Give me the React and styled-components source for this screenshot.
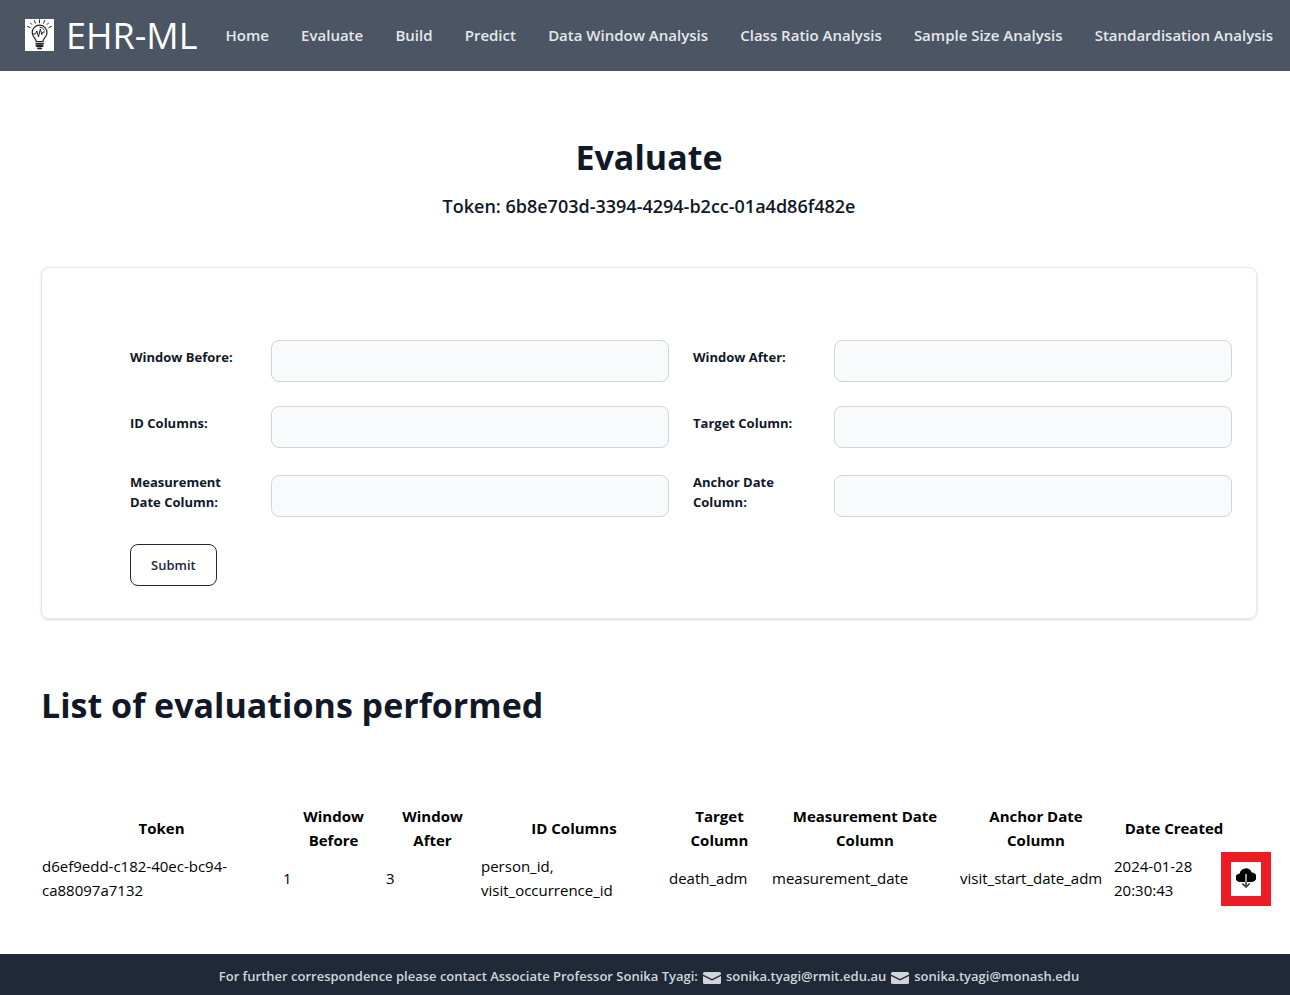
import React from "react";
import styled, { createGlobalStyle } from "styled-components";

const GlobalStyle = createGlobalStyle`
  *, *::before, *::after { box-sizing: border-box; }
  body {
    margin: 0;
    background: #fff;
    color: #000;
    font-family: "Segoe UI", "Open Sans", "Noto Sans", sans-serif;
    font-size: 15px;
    line-height: 24px;
  }
  h1, h2, p { margin: 0; }
  button, input { font: inherit; color: inherit; }
`;

const Page = styled.div`
  display: flex;
  flex-direction: column;
  min-height: 100vh;
`;

const Header = styled.header`
  display: flex;
  align-items: center;
  justify-content: space-between;
  gap: 28px;
  min-height: 71px;
  padding: 0 17px 0 25px;
  background: #4b5563;
`;

const Brand = styled.a`
  display: flex;
  align-items: center;
  gap: 12px;
  color: #fff;
  text-decoration: none;
  font-size: 36px;
  font-weight: 500;
  line-height: 40px;
  white-space: nowrap;

  svg { display: block; margin-bottom: 2px; }
`;

const Nav = styled.nav`
  display: flex;
  flex: 1;
  justify-content: space-between;
  padding-bottom: 2px;
`;

const NavLink = styled.a`
  color: #e5e7eb;
  font-size: 15px;
  font-weight: 600;
  text-decoration: none;
  white-space: nowrap;
`;

const Main = styled.main`
  flex: 1;
  padding: 64px 33px 50px 41px;
`;

const Title = styled.h1`
  color: #111827;
  font-size: 34px;
  font-weight: 700;
  line-height: 45px;
  text-align: ${(p) => (p.$center ? "center" : "left")};
`;

const Token = styled.p`
  margin-top: 12px;
  color: #111827;
  font-size: 18px;
  font-weight: 600;
  line-height: 28px;
  text-align: center;
`;

const Card = styled.section`
  margin: 47px 0 64px;
  padding: 72px 24px 32px 88px;
  border: 1px solid #e5e7eb;
  border-radius: 8px;
  box-shadow: 0 1px 3px rgba(0, 0, 0, 0.1), 0 1px 2px rgba(0, 0, 0, 0.06);
`;

const Form = styled.form`
  display: grid;
  grid-template-columns: 117px 1fr 117px 1fr;
  gap: 24px;
  align-items: center;
`;

const Label = styled.label`
  margin-bottom: 8px;
  color: #111827;
  font-size: 13px;
  font-weight: 700;
  line-height: 20px;
`;

const Input = styled.input`
  width: 100%;
  height: 42px;
  padding: 0 10px;
  border: 1px solid #d1d5db;
  border-radius: 8px;
  background: #f9fafb;
`;

const SubmitButton = styled.button`
  justify-self: start;
  height: 42px;
  padding: 0 20px;
  border: 1px solid #1f2937;
  border-radius: 8px;
  background: #fff;
  color: #1f2937;
  font-size: 13px;
  font-weight: 600;
  line-height: 20px;
`;

const Table = styled.table`
  width: 100%;
  margin-top: 76px;
  table-layout: fixed;
  border-collapse: collapse;

  th, td { padding: 0 1px 2px; }
  th { font-weight: 700; }
  td { text-align: left; white-space: nowrap; }
`;

const DownloadCell = styled.td`
  position: relative;
`;

const DownloadButton = styled.button`
  position: absolute;
  top: 50%;
  left: 50%;
  transform: translate(-50%, -50%);
  display: flex;
  align-items: center;
  justify-content: center;
  width: 50px;
  height: 54px;
  padding: 0 0 2px;
  border: 10px solid #ed1c24;
  background: #fff;
`;

const Footer = styled.footer`
  display: flex;
  align-items: center;
  justify-content: center;
  gap: 5px;
  min-height: 41px;
  padding: 2px 0 0 8px;
  background: #1f2937;
  color: #d1d5db;
  font-size: 13px;
  font-weight: 600;
`;

const MailLink = styled.a`
  display: flex;
  align-items: center;
  gap: 5px;
  color: inherit;
  text-decoration: none;

  svg { margin-top: 4px; }
`;

const links = [
  "Home",
  "Evaluate",
  "Build",
  "Predict",
  "Data Window Analysis",
  "Class Ratio Analysis",
  "Sample Size Analysis",
  "Standardisation Analysis",
];

const fields = [
  ["windowBefore", "Window Before:"],
  ["windowAfter", "Window After:"],
  ["idColumns", "ID Columns:"],
  ["targetColumn", "Target Column:"],
  ["measurementDate", "Measurement Date Column:"],
  ["anchorDate", "Anchor Date Column:"],
];

const columns = [
  [241, "Token"],
  [103, "Window", "Before"],
  [95, "Window", "After"],
  [188, "ID Columns"],
  [103, "Target", "Column"],
  [188, "Measurement Date", "Column"],
  [154, "Anchor Date", "Column"],
  [122, "Date Created"],
  [22, ""],
];

const evaluations = [
  [
    ["d6ef9edd-c182-40ec-bc94-", "ca88097a7132"],
    ["1"],
    ["3"],
    ["person_id,", "visit_occurrence_id"],
    ["death_adm"],
    ["measurement_date"],
    ["visit_start_date_adm"],
    ["2024-01-28", "20:30:43"],
  ],
];

const Lines = ({ items }) =>
  items.map((line, i) => (
    <React.Fragment key={line}>
      {i > 0 && <br />}
      {line}
    </React.Fragment>
  ));

const BulbLogo = () => (
  <svg width="29" height="32" viewBox="0 0 29 32" fill="none" stroke="#222" strokeLinecap="round" aria-hidden="true">
    <rect width="29" height="32" fill="#fff" stroke="none" />
    <path strokeWidth="1" d="M14.5 .8v3M9.300 1.500l1.200 2.800M19.700 1.500l-1.200 2.800M5.500 4l1.300 1.400M23.500 4l-1.300 1.400M2.500 7.400l2.500 1.200M26.500 7.400l-2.500 1.200" />
    <path strokeWidth="1.200" d="M11.200 22.600c0-3.200-4-4.400-4-9a7.400 7.400 0 0 1 14.800 0c0 4.600-4 5.800-4 9z" />
    <path strokeWidth="1" d="M7.500 15h3l1.400-3 1.600 6 1.800-8 1.500 5.500 1.200-2.500h1.500M15 8.300c2 .2 3.400 1.200 4.200 2.800" />
    <path strokeWidth="1.800" d="M11.200 24.800h6.800M11.500 27h6.200M13 29.300h3.200" />
  </svg>
);

const CloudDownload = () => (
  <svg width="20" height="20" viewBox="0 0 20 20" aria-hidden="true">
    <path d="M4.200 14A4.200 4.200 0 0 1 3.700 5.400 6.200 6.200 0 0 1 15.600 4.400 4.800 4.800 0 0 1 15.800 14z" />
    <path d="M6.300 15.500l3.700 3.500 3.700-3.500" fill="none" stroke="#222" strokeWidth="1.500" />
    <path d="M10 6v8" stroke="#aaa" strokeWidth="1.800" />
    <path d="M10 14v4.500" stroke="#555" strokeWidth="1.800" />
  </svg>
);

const Envelope = () => (
  <svg width="18" height="12" viewBox="0 0 18 12" fill="currentColor" aria-hidden="true">
    <path d="M1.500 0h15A1.500 1.500 0 0 1 18 1.500v1L9 7 0 2.500v-1A1.500 1.500 0 0 1 1.500 0z" />
    <path d="M0 4l9 4.500L18 4v6.500a1.500 1.500 0 0 1-1.500 1.500h-15A1.500 1.500 0 0 1 0 10.500z" />
  </svg>
);

export default function App() {
  return (
    <Page>
      <GlobalStyle />
      <Header>
        <Brand href="#home">
          <BulbLogo />
          EHR-ML
        </Brand>
        <Nav>
          {links.map((text) => (
            <NavLink key={text} href="#">{text}</NavLink>
          ))}
        </Nav>
      </Header>
      <Main>
        <Title $center>Evaluate</Title>
        <Token>Token: 6b8e703d-3394-4294-b2cc-01a4d86f482e</Token>
        <Card>
          <Form>
            {fields.map(([id, text]) => (
              <React.Fragment key={id}>
                <Label htmlFor={id}>{text}</Label>
                <Input id={id} name={id} type="text" />
              </React.Fragment>
            ))}
            <SubmitButton type="button">Submit</SubmitButton>
          </Form>
        </Card>
        <Title as="h2">List of evaluations performed</Title>
        <Table>
          <colgroup>
            {columns.map(([width], i) => <col key={i} width={width} />)}
          </colgroup>
          <thead>
            <tr>
              {columns.map(([, ...text], i) => (
                <th key={i} scope="col"><Lines items={text} /></th>
              ))}
            </tr>
          </thead>
          <tbody>
            {evaluations.map((row, r) => (
              <tr key={r}>
                {row.map((cell, i) => <td key={i}><Lines items={cell} /></td>)}
                <DownloadCell>
                  <DownloadButton type="button" aria-label="Download">
                    <CloudDownload />
                  </DownloadButton>
                </DownloadCell>
              </tr>
            ))}
          </tbody>
        </Table>
      </Main>
      <Footer>
        <span>For further correspondence please contact Associate Professor Sonika Tyagi:</span>
        <MailLink href="mailto:sonika.tyagi@rmit.edu.au"><Envelope />sonika.tyagi@rmit.edu.au</MailLink>
        <MailLink href="mailto:sonika.tyagi@monash.edu"><Envelope />sonika.tyagi@monash.edu</MailLink>
      </Footer>
    </Page>
  );
}
